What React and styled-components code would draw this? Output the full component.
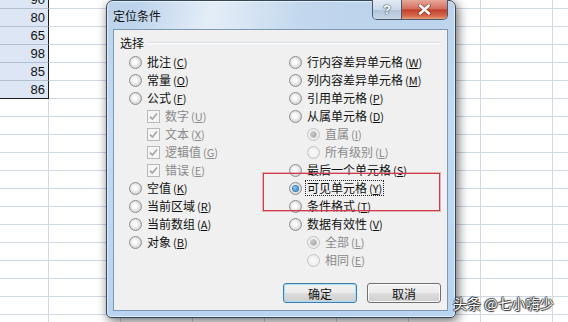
import React from "react";
import styled, { createGlobalStyle, css } from "styled-components";

const GlobalStyle = createGlobalStyle`
  html, body {
    margin: 0;
    padding: 0;
    background: #fff;
  }
  body {
    font-family: "Noto Sans CJK SC", "Noto Sans", sans-serif;
  }
`;

const Page = styled.div`
  position: relative;
  width: 568px;
  height: 322px;
  overflow: hidden;
  background: #fff;
`;

const Sheet = styled.div`
  display: grid;
  grid-template-columns: repeat(9, 72px);
  grid-auto-rows: 18px;
  margin: -9px 0 0 -23px;
`;

const Cell = styled.div`
  box-sizing: border-box;
  border-right: 1px solid #d0d7e5;
  border-bottom: 1px solid #d0d7e5;
  text-align: right;
  padding-right: 3px;
  font-family: "Liberation Sans", Arial, sans-serif;
  font-size: 13px;
  line-height: 17px;
  color: #111;
  ${({ $selected }) =>
    $selected &&
    css`
      background: #dce6f4;
      border-right-color: #1e1e1e;
      border-bottom-color: #b4bfcf;
    `}
  ${({ $last }) =>
    $last &&
    css`
      border-bottom-color: #1e1e1e;
    `}
`;

const Dialog = styled.div`
  position: absolute;
  left: 106px;
  top: 0;
  width: 350px;
  height: 318px;
  box-sizing: border-box;
  border: 1px solid #34465a;
  border-radius: 7px 7px 5px 5px;
  background:
    linear-gradient(100deg, rgba(255,255,255,0) 8%, rgba(255,255,255,0.6) 30%, rgba(255,255,255,0.1) 55%, rgba(255,255,255,0) 70%) top / 100% 30px no-repeat,
    linear-gradient(#bcd3eb, #c2daf3 40%, #b9d4f0);
  box-shadow: 2px 3px 11px rgba(0, 0, 0, 0.6), inset 0 0 0 1px rgba(255, 255, 255, 0.55);
  padding: 0 7px 6px 6px;
  display: flex;
  flex-direction: column;
`;

const TitleBar = styled.div`
  height: 28px;
  display: flex;
  align-items: center;
  font-size: 12px;
  color: #111;
`;

const CaptionButtons = styled.div`
  position: absolute;
  top: -1px;
  right: 7px;
  display: flex;
  height: 19px;
  border: 1px solid #4a5a6c;
  border-top: none;
  border-radius: 0 0 5px 5px;
  overflow: hidden;
`;

const HelpButton = styled.div`
  width: 28px;
  display: flex;
  align-items: center;
  justify-content: center;
  border-right: 1px solid #4a5a6c;
  background: linear-gradient(#e2ebf5, #c9d8e8 50%, #b1c4d8 51%, #c6d6e6);
  color: #fff;
  font-family: "Liberation Sans", sans-serif;
  font-weight: bold;
  font-size: 13px;
  text-shadow: 0 0 2px #34465a, 0 0 1px #34465a;
`;

const CloseButton = styled.div`
  width: 45px;
  display: flex;
  align-items: center;
  justify-content: center;
  background: linear-gradient(#e6a89a, #d4705f 45%, #c2412b 52%, #d56a4e 85%, #e8a27f);
`;

const Client = styled.div`
  flex: 1;
  box-sizing: border-box;
  border: 1px solid #7e98b3;
  background: #f0f0f0;
  display: flex;
  flex-direction: column;
  padding: 5px 6px 7px 6px;
`;

const GroupHeader = styled.div`
  display: flex;
  align-items: center;
  height: 14px;
  gap: 4px;
  font-size: 12px;
  color: #111;
  margin-right: 0;
`;

const GroupLine = styled.div`
  flex: 1;
  height: 1px;
  background: #d5dfe5;
  box-shadow: 0 1px 0 #fff;
`;

const Columns = styled.div`
  display: grid;
  grid-template-columns: 160px 1fr;
  margin-top: 4px;
  padding-left: 9px;
`;

const Column = styled.div`
  display: flex;
  flex-direction: column;
`;

const Item = styled.div`
  display: flex;
  align-items: center;
  height: 18px;
  gap: 4px;
  padding-left: ${({ $indent }) => ($indent ? "18px" : "0")};
  font-size: 12px;
  color: ${({ $disabled }) => ($disabled ? "#8a8a8a" : "#111")};
  white-space: nowrap;
`;

const Label = styled.span`
  line-height: 14px;
  padding: 0 1px;
  margin-left: -1px;
  border: 1px dotted ${({ $focus }) => ($focus ? "#222" : "transparent")};
`;

const Key = styled.span`
  margin-left: 2px;
  font-size: 11px;
`;

const Radio = styled.span`
  box-sizing: border-box;
  width: 13px;
  height: 13px;
  border-radius: 50%;
  flex: none;
  display: flex;
  align-items: center;
  justify-content: center;
  border: 1px solid ${({ $disabled }) => ($disabled ? "#c4c4c4" : "#8c8f93")};
  background: ${({ $disabled }) =>
    $disabled
      ? "radial-gradient(circle at 50% 50%, #f6f6f6 30%, #e4e4e4)"
      : "radial-gradient(circle at 45% 45%, #ffffff 20%, #dcdcdc 60%, #c8c8c8)"};

  &::after {
    content: "";
    display: ${({ $checked }) => ($checked ? "block" : "none")};
    width: 5px;
    height: 5px;
    border-radius: 50%;
    background: ${({ $disabled }) =>
      $disabled
        ? "radial-gradient(circle at 40% 40%, #d0d0d0, #8e8e8e)"
        : "radial-gradient(circle at 40% 40%, #8ad8ff, #1763a8)"};
    box-shadow: ${({ $disabled }) => ($disabled ? "0 0 0 1px #c8c8c8" : "0 0 0 1px #3d7cb8")};
  }
`;

const CheckBox = styled.span`
  box-sizing: border-box;
  width: 13px;
  height: 13px;
  flex: none;
  border: 1px solid #b9b9b9;
  background: #f5f5f5;
  display: flex;
  align-items: center;
  justify-content: center;
`;

const ButtonRow = styled.div`
  margin-top: auto;
  display: flex;
  justify-content: flex-end;
  gap: 10px;
`;

const Button = styled.div`
  box-sizing: border-box;
  width: 74px;
  height: 20px;
  display: flex;
  align-items: center;
  justify-content: center;
  font-size: 12px;
  color: #111;
  border-radius: 3px;
  border: 1px solid ${({ $primary }) => ($primary ? "#3c7fb1" : "#707070")};
  background: linear-gradient(#f2f2f2 0%, #ebebeb 50%, #dddddd 51%, #cfcfcf 100%);
  box-shadow: ${({ $primary }) =>
    $primary ? "inset 0 0 0 1px #a8dcf6" : "inset 0 0 0 1px rgba(255,255,255,0.8)"};
`;

const Annotation = styled.div`
  position: absolute;
  left: 263px;
  top: 173px;
  width: 177px;
  height: 38px;
  box-sizing: border-box;
  border: 1px solid #cf3b4b;
  box-shadow: 0 0 0 1px rgba(207, 59, 75, 0.35);
`;

const Watermark = styled.div`
  position: absolute;
  left: 453px;
  top: 295px;
  font-size: 14px;
  line-height: 16px;
  color: #fff;
  white-space: nowrap;
  text-shadow: 0 0 1px #000, 1px 1px 1px #333, -1px 0 1px #444, 0 -1px 1px #444;
`;

const values = ["90", "80", "65", "98", "85", "86"];

const leftItems = [
  { text: "批注", key: "C" },
  { text: "常量", key: "O" },
  { text: "公式", key: "F" },
  { text: "数字", key: "U", check: true, indent: true, disabled: true },
  { text: "文本", key: "X", check: true, indent: true, disabled: true },
  { text: "逻辑值", key: "G", check: true, indent: true, disabled: true },
  { text: "错误", key: "E", check: true, indent: true, disabled: true },
  { text: "空值", key: "K" },
  { text: "当前区域", key: "R" },
  { text: "当前数组", key: "A" },
  { text: "对象", key: "B" },
];

const rightItems = [
  { text: "行内容差异单元格", key: "W" },
  { text: "列内容差异单元格", key: "M" },
  { text: "引用单元格", key: "P" },
  { text: "从属单元格", key: "D" },
  { text: "直属", key: "I", indent: true, disabled: true, checked: true },
  { text: "所有级别", key: "L", indent: true, disabled: true },
  { text: "最后一个单元格", key: "S" },
  { text: "可见单元格", key: "Y", checked: true, focus: true },
  { text: "条件格式", key: "T" },
  { text: "数据有效性", key: "V" },
  { text: "全部", key: "L", indent: true, disabled: true, checked: true },
  { text: "相同", key: "E", indent: true, disabled: true },
];

const CheckMark = () => (
  <svg width="9" height="9" viewBox="0 0 9 9">
    <path d="M1 4.6 L3.4 7 L8 1.6" fill="none" stroke="#a4a4a4" strokeWidth="1.6" />
  </svg>
);

const Option = ({ item }) => (
  <Item $indent={item.indent} $disabled={item.disabled}>
    {item.check ? (
      <CheckBox>
        <CheckMark />
      </CheckBox>
    ) : (
      <Radio $checked={item.checked} $disabled={item.disabled} />
    )}
    <Label $focus={item.focus}>
      {item.text}
      <Key>
        (<u>{item.key}</u>)
      </Key>
    </Label>
  </Item>
);

const App = () => {
  const rows = 19;
  const cols = 9;
  const cells = [];
  for (let r = 0; r < rows; r++) {
    for (let c = 0; c < cols; c++) {
      const selected = c === 0 && r < values.length;
      cells.push(
        <Cell key={`${r}-${c}`} $selected={selected} $last={selected && r === values.length - 1}>
          {selected ? values[r] : ""}
        </Cell>
      );
    }
  }

  return (
    <Page>
      <GlobalStyle />
      <Sheet>{cells}</Sheet>

      <Dialog>
        <TitleBar>定位条件</TitleBar>
        <CaptionButtons>
          <HelpButton>?</HelpButton>
          <CloseButton>
            <svg width="13" height="11" viewBox="0 0 13 11">
              <path
                d="M2 1.5 L11 9.5 M11 1.5 L2 9.5"
                stroke="#5a1a10"
                strokeWidth="4"
                strokeLinecap="round"
                opacity="0.5"
              />
              <path d="M2 1.5 L11 9.5 M11 1.5 L2 9.5" stroke="#fff" strokeWidth="2.4" strokeLinecap="round" />
            </svg>
          </CloseButton>
        </CaptionButtons>
        <Client>
          <GroupHeader>
            选择
            <GroupLine />
          </GroupHeader>
          <Columns>
            <Column>
              {leftItems.map((item) => (
                <Option key={item.text} item={item} />
              ))}
            </Column>
            <Column>
              {rightItems.map((item) => (
                <Option key={item.text} item={item} />
              ))}
            </Column>
          </Columns>
          <ButtonRow>
            <Button $primary>确定</Button>
            <Button>取消</Button>
          </ButtonRow>
        </Client>
      </Dialog>

      <Annotation />
      <Watermark>头条 @七小嗨少</Watermark>
    </Page>
  );
};

export default App;
